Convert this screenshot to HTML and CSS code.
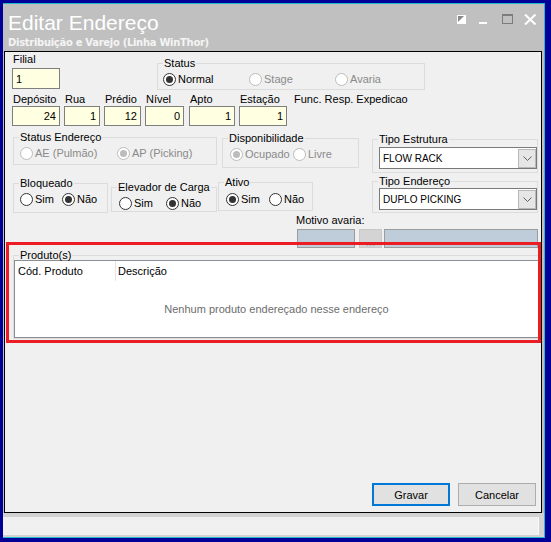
FILE: index.html
```html
<!DOCTYPE html>
<html lang="pt-BR">
<head>
    <meta charset="UTF-8">
    <title>Editar Endereço</title>
    <link rel="stylesheet" href="styles.css">
</head>
<body>
<div class="window">
    <div class="titlebar">
        <div class="title-text">
            <h1 class="title">Editar Endereço</h1>
            <div class="subtitle">Distribuição e Varejo (Linha WinThor)</div>
        </div>
        <svg class="title-buttons" width="80" height="11" viewBox="0 0 80 11">
            <rect x="0" y="1" width="9" height="9" fill="#ffffff"/>
            <polygon points="1,2 7,2 1,8" fill="#8a8a8a"/>
            <rect x="22" y="8" width="8" height="2" fill="#ffffff"/>
            <rect x="45.5" y="0.5" width="10" height="9" fill="none" stroke="#7c7c7c"/>
            <rect x="45" y="0" width="11" height="2" fill="#7c7c7c"/>
            <path d="M68 0.5 L78.5 10.5 M78.5 0.5 L68 10.5" stroke="#ffffff" stroke-width="2"/>
        </svg>
    </div>

    <div class="panel">
        <div class="row row-top">
            <div class="field f-filial">
                <label class="lbl">Filial</label>
                <input class="txt" type="text" value="1" readonly>
            </div>
            <fieldset class="grp grp-status">
                <legend>Status</legend>
                <div class="opts">
                    <span class="opt"><span class="dot on"></span>Normal</span>
                    <span class="opt off"><span class="dot"></span>Stage</span>
                    <span class="opt off"><span class="dot"></span>Avaria</span>
                </div>
            </fieldset>
        </div>

        <div class="row-fields">
            <div class="field"><label class="lbl">Depósito</label><input class="txt num" type="text" value="24" readonly></div>
            <div class="field"><label class="lbl">Rua</label><input class="txt num" type="text" value="1" readonly></div>
            <div class="field"><label class="lbl">Prédio</label><input class="txt num" type="text" value="12" readonly></div>
            <div class="field"><label class="lbl">Nível</label><input class="txt num w39" type="text" value="0" readonly></div>
            <div class="field"><label class="lbl">Apto</label><input class="txt num" type="text" value="1" readonly></div>
            <div class="field"><label class="lbl">Estação</label><input class="txt num w48" type="text" value="1" readonly></div>
            <div class="field"><label class="lbl">Func. Resp. Expedicao</label></div>
        </div>

        <div class="row row-a">
            <fieldset class="grp grp-end">
                <legend>Status Endereço</legend>
                <div class="opts">
                    <span class="opt off"><span class="dot"></span>AE (Pulmão)</span>
                    <span class="opt off"><span class="dot on"></span>AP (Picking)</span>
                </div>
            </fieldset>
            <fieldset class="grp grp-disp">
                <legend>Disponibilidade</legend>
                <div class="opts">
                    <span class="opt off"><span class="dot on"></span>Ocupado</span>
                    <span class="opt off"><span class="dot"></span>Livre</span>
                </div>
            </fieldset>
            <fieldset class="grp grp-estr">
                <legend>Tipo Estrutura</legend>
                <div class="combo">
                    <span class="combo-text">FLOW RACK</span>
                    <span class="combo-btn">
                        <svg width="9" height="5" viewBox="0 0 9 5"><path d="M0.5 0.5 L4.5 4.5 L8.5 0.5" fill="none" stroke="#606060"/></svg>
                    </span>
                </div>
            </fieldset>
        </div>

        <div class="row row-b">
            <fieldset class="grp grp-bloq">
                <legend>Bloqueado</legend>
                <div class="opts">
                    <span class="opt"><span class="dot"></span>Sim</span>
                    <span class="opt"><span class="dot on"></span>Não</span>
                </div>
            </fieldset>
            <fieldset class="grp grp-elev">
                <legend>Elevador de Carga</legend>
                <div class="opts">
                    <span class="opt"><span class="dot"></span>Sim</span>
                    <span class="opt"><span class="dot on"></span>Não</span>
                </div>
            </fieldset>
            <fieldset class="grp grp-ativo">
                <legend>Ativo</legend>
                <div class="opts">
                    <span class="opt"><span class="dot on"></span>Sim</span>
                    <span class="opt"><span class="dot"></span>Não</span>
                </div>
            </fieldset>
            <fieldset class="grp grp-tend">
                <legend>Tipo Endereço</legend>
                <div class="combo">
                    <span class="combo-text">DUPLO PICKING</span>
                    <span class="combo-btn">
                        <svg width="9" height="5" viewBox="0 0 9 5"><path d="M0.5 0.5 L4.5 4.5 L8.5 0.5" fill="none" stroke="#606060"/></svg>
                    </span>
                </div>
            </fieldset>
        </div>

        <div class="row-c">
            <div class="lbl">Motivo avaria:</div>
            <div class="motivo">
                <span class="mot mot1"></span>
                <span class="mot-btn">...</span>
                <span class="mot mot2"></span>
            </div>
        </div>

        <fieldset class="grp grp-prod">
            <legend>Produto(s)</legend>
            <div class="listview">
                <div class="lv-head">
                    <span class="lv-col lv-cod">Cód. Produto</span>
                    <span class="lv-col">Descrição</span>
                </div>
                <div class="lv-empty">Nenhum produto endereçado nesse endereço</div>
            </div>
        </fieldset>

        <div class="buttons">
            <button type="button" class="btn btn-default">Gravar</button>
            <button type="button" class="btn">Cancelar</button>
        </div>

        <!-- destaque vermelho da captura -->
        <div class="highlight"></div>
    </div>

    <div class="footer">
        <div class="statusbar"></div>
    </div>
</div>
</body>
</html>
```

FILE: styles.css
```css
* {
    box-sizing: border-box;
}

body {
    margin: 0;
    width: 551px;
    height: 542px;
    overflow: hidden;
    background-color: #000099;
    font-family: 'Liberation Sans', Arial, sans-serif;
    font-size: 11px;
    color: #000;
}

.window {
    margin: 3px 0 0 3px;
    width: 542px;
    height: 535px;
    background-color: #c0c0c0;
    border-top: 1px solid #22b8c8;
    border-right: 1px solid #22b8c8;
    border-bottom: 1px solid #22b8c8;
}

/* barra de titulo */
.titlebar {
    height: 47px;
    display: flex;
    justify-content: space-between;
    align-items: flex-start;
}

.title-text {
    padding: 7px 0 0 5px;
}

.title {
    margin: 0;
    font-size: 21px;
    line-height: 24px;
    font-weight: normal;
    color: #fff;
}

.subtitle {
    margin-top: 2px;
    font-family: 'DejaVu Sans', sans-serif;
    font-weight: bold;
    font-size: 10px;
    letter-spacing: -0.3px;
    line-height: 11px;
    color: #f4f4f4;
}

.title-buttons {
    display: block;
    margin: 10px 7px 0 0;
}

/* painel principal */
.panel {
    position: relative;
    margin-left: 1px;
    width: 538px;
    height: 462px;
    border: 1px solid #000;
    background-color: #f0f0f0;
    display: flex;
    flex-direction: column;
}

.row {
    display: flex;
    align-items: flex-start;
}

.lbl {
    display: block;
    line-height: 13px;
    padding-left: 1px;
    white-space: nowrap;
}

.txt {
    display: block;
    width: 100%;
    height: 20px;
    margin: 0;
    padding: 0 3px;
    border: 1px solid #7f7f7f;
    background-color: #ffffe1;
    font-family: inherit;
    font-size: 11px;
    color: #000;
    outline: none;
}

.num {
    text-align: right;
}

.w39 { width: 39px; }
.w48 { width: 48px; }

.row-top {
    margin-top: 1px;
}

.f-filial {
    margin-left: 7px;
    width: 48px;
}

.f-filial .txt {
    margin-top: 2px;
    height: 21px;
}

.row-fields {
    display: grid;
    grid-template-columns: 48px 36px 37px 40px 46px 50px auto;
    column-gap: 4px;
    margin: 3px 0 0 7px;
}

/* grupos */
.grp {
    margin: 0;
    padding: 0;
    min-width: 0;
    border: 1px solid #dcdcdc;
}

.grp legend {
    margin-left: 5px;
    padding: 0 1px;
    line-height: 12px;
    font-size: 11px;
    white-space: nowrap;
}

.opts {
    display: flex;
    height: 13px;
    align-items: center;
}

.opt {
    display: flex;
    align-items: center;
    line-height: 13px;
    white-space: nowrap;
}

.opt.off {
    color: #8a8a8a;
}

.dot {
    position: relative;
    width: 13px;
    height: 13px;
    margin-right: 2px;
    border: 1px solid #333;
    border-radius: 50%;
    background-color: #fff;
    flex: none;
}

.dot.on::after {
    content: '';
    position: absolute;
    left: 2px;
    top: 2px;
    width: 7px;
    height: 7px;
    border-radius: 50%;
    background-color: #333;
}

.off .dot {
    border-color: #bcbcbc;
}

.off .dot.on::after {
    background-color: #bcbcbc;
}

.grp-status {
    margin: 4px 0 0 97px;
    width: 268px;
    height: 33px;
    padding-top: 4px;
}
.grp-status .opts { padding-left: 5px; }
.grp-status .opt { width: 86px; }

.row-a {
    margin-top: 5px;
}

.grp-end {
    margin-left: 8px;
    width: 204px;
    height: 34px;
    padding-top: 4px;
}
.grp-end .opts { padding-left: 6px; }
.grp-end .opt:first-child { width: 97px; }

.grp-disp {
    margin: 1px 0 0 5px;
    width: 137px;
    height: 36px;
    padding-top: 4px;
}
.grp-disp .opts { padding-left: 7px; }
.grp-disp .opt:first-child { width: 63px; }

.grp-estr {
    margin: 2px 0 0 13px;
    width: 166px;
    height: 40px;
    padding-top: 2px;
}

.row-b {
    margin-top: 2px;
}

.grp-bloq {
    margin: 2px 0 0 8px;
    width: 95px;
    height: 36px;
    padding-top: 4px;
}
.grp-bloq .opts { padding-left: 6px; }
.grp-bloq .opt:first-child { width: 42px; }

.grp-elev {
    margin: 6px 0 0 3px;
    width: 106px;
    height: 31px;
    padding-top: 4px;
}
.grp-elev .opts { padding-left: 7px; }
.grp-elev .opt:first-child { width: 47px; }

.grp-ativo {
    margin: 1px 0 0 1px;
    width: 95px;
    height: 35px;
    padding-top: 5px;
}
.grp-ativo .opts { padding-left: 7px; }
.grp-ativo .opt:first-child { width: 43px; }

.grp-tend {
    margin-left: 59px;
    width: 166px;
    height: 38px;
    padding-top: 1px;
}

/* combo */
.combo {
    display: flex;
    align-items: center;
    margin-left: 6px;
    width: 158px;
    height: 22px;
    border: 1px solid #7a7a7a;
    background-color: #fff;
}

.combo-text {
    padding-left: 3px;
    font-size: 10px;
    white-space: nowrap;
}

.combo-btn {
    margin-left: auto;
    width: 18px;
    height: 19px;
    border: 1px solid #b8b8b8;
    background-color: #e6e6e6;
    display: flex;
    align-items: center;
    justify-content: center;
}

.combo-btn svg {
    display: block;
}

/* motivo avaria */
.row-c {
    margin: 1px 0 0 290px;
}

.motivo {
    display: flex;
    margin: 2px 0 0 2px;
    height: 19px;
}

.mot {
    border: 1px solid #9c9c9c;
    background-color: #bfcddb;
}

.mot1 { width: 58px; }

.mot-btn {
    margin-left: 4px;
    width: 23px;
    border: 1px solid #c8c8c8;
    background-color: #d4d4d4;
    color: #a8a8a8;
    text-align: center;
    line-height: 24px;
}

.mot2 {
    margin-left: 2px;
    width: 154px;
}

/* produtos */
.grp-prod {
    margin: 1px 0 0 8px;
    width: 527px;
    height: 90px;
}

.listview {
    margin: -1px 0 0 0;
    width: 525px;
    height: 78px;
    border: 1px solid #8a8f96;
    background-color: #fff;
}

.lv-head {
    display: flex;
    height: 20px;
}

.lv-col {
    line-height: 20px;
    padding-left: 2px;
}

.lv-cod {
    width: 101px;
    padding-left: 3px;
    border-right: 1px solid #e5e5e5;
}

.lv-empty {
    margin-top: 22px;
    text-align: center;
    line-height: 13px;
    color: #6d6d6d;
}

/* botoes */
.buttons {
    margin-top: auto;
    display: flex;
    justify-content: flex-end;
    gap: 8px;
    padding: 0 5px 6px 0;
}

.btn {
    width: 78px;
    height: 23px;
    padding: 0;
    border: 1px solid #adadad;
    background-color: #e1e1e1;
    font-family: inherit;
    font-size: 11px;
    color: #000;
}

.btn-default {
    border: 2px solid #0078d7;
}

.highlight {
    position: absolute;
    left: 1px;
    top: 190px;
    width: 535px;
    height: 101px;
    border: 3px solid #ec1c24;
}

/* rodape */
.footer {
    padding: 4px 0 2px 0;
    background-color: #d2d2d2;
}

.statusbar {
    width: 536px;
    height: 18px;
    background-color: #f0f0f0;
    border-right: 1px solid #fafafa;
}
```
